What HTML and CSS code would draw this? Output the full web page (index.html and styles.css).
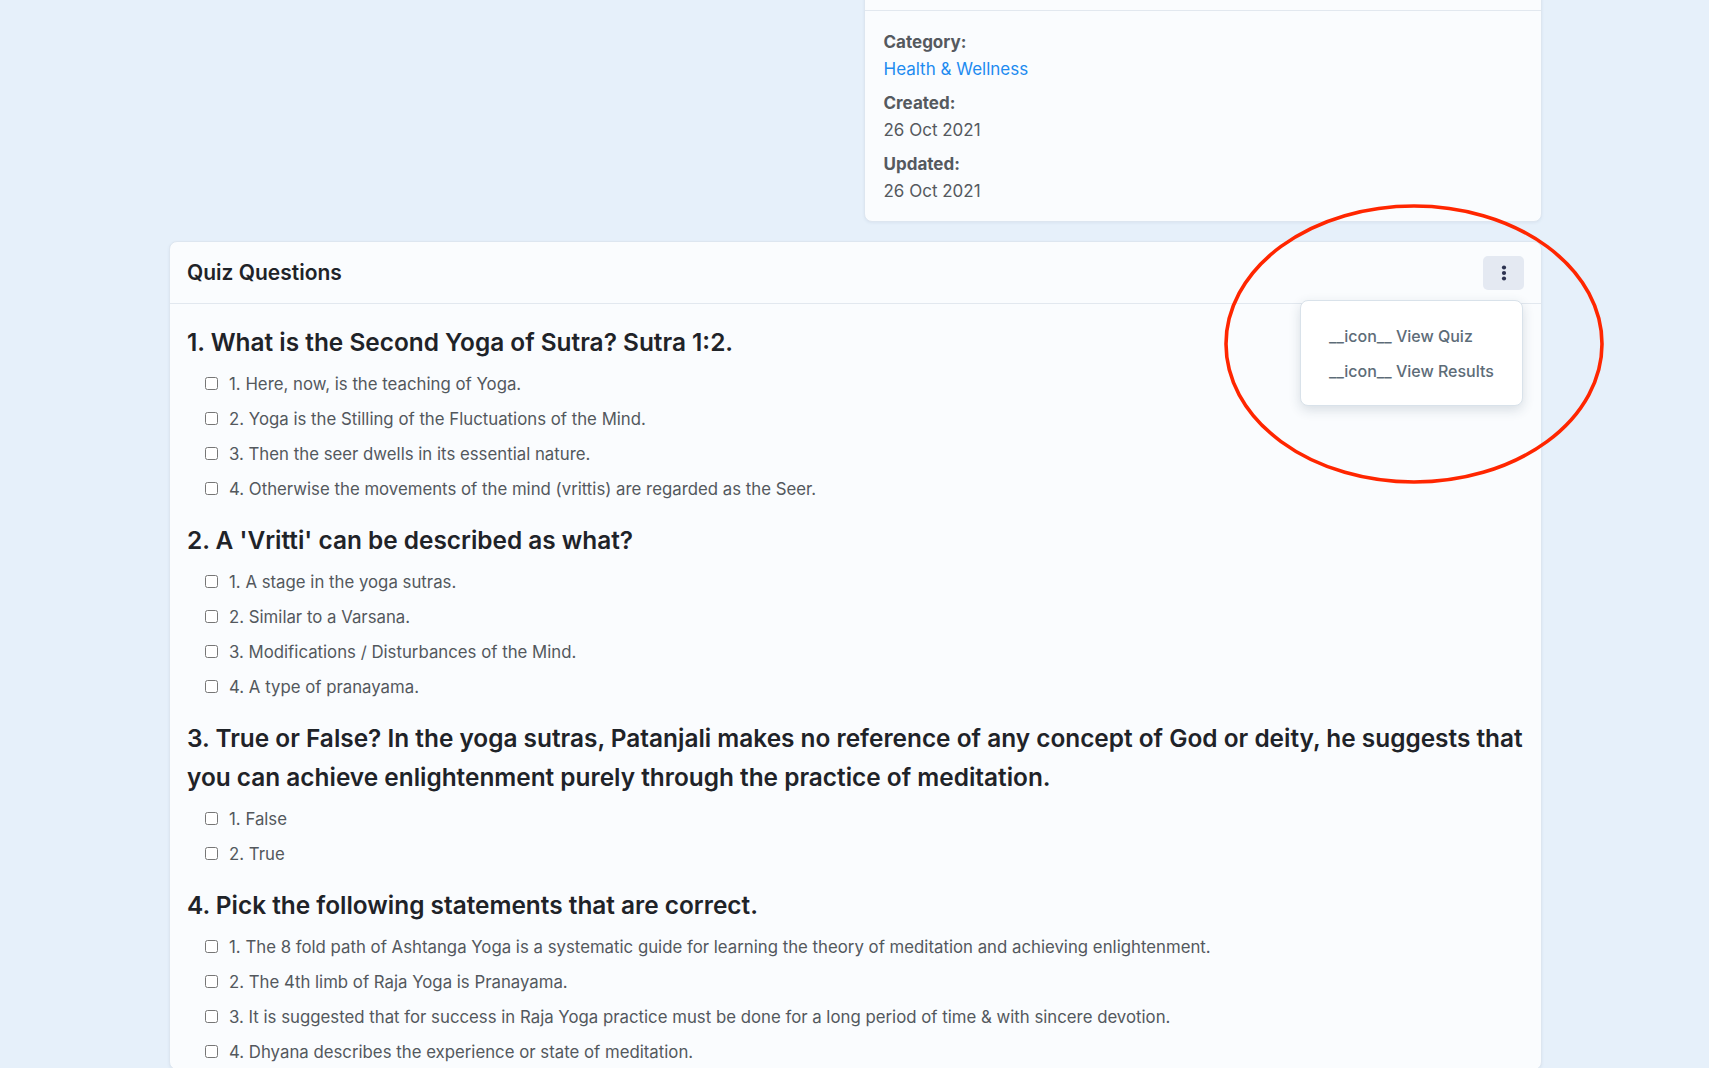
FILE: index.html
```html
<!DOCTYPE html>
<html lang="en">
<head>
    <meta charset="UTF-8">
    <title>Quiz</title>
    <link rel="stylesheet" href="styles.css">
</head>
<body>
<div class="page">
    <div class="top-row">
        <div class="spacer"></div>
        <div class="card info-card">
            <div class="card-head"></div>
            <div class="info-body">
                <div class="info-item">
                    <div class="info-label">Category:</div>
                    <a class="info-link" href="#">Health &amp; Wellness</a>
                </div>
                <div class="info-item">
                    <div class="info-label">Created:</div>
                    <div class="info-value">26 Oct 2021</div>
                </div>
                <div class="info-item">
                    <div class="info-label">Updated:</div>
                    <div class="info-value">26 Oct 2021</div>
                </div>
            </div>
        </div>
    </div>

    <div class="card quiz-card">
        <div class="quiz-head">
            <h2>Quiz Questions</h2>
            <div class="menu">
                <button class="menu-btn" type="button">
                    <svg width="6" height="18" viewBox="0 0 6 18">
                        <circle cx="3" cy="3.5" r="2.1" fill="#2c3250"/>
                        <circle cx="3" cy="9" r="2.1" fill="#2c3250"/>
                        <circle cx="3" cy="14.5" r="2.1" fill="#2c3250"/>
                    </svg>
                </button>
                <ul class="menu-list">
                    <li>__icon__ View Quiz</li>
                    <li>__icon__ View Results</li>
                </ul>
            </div>
        </div>

        <div class="quiz-body">
            <div class="question">
                <h3>1. What is the Second Yoga of Sutra? Sutra 1:2.</h3>
                <label class="option"><input type="checkbox"> 1. Here, now, is the teaching of Yoga.</label>
                <label class="option"><input type="checkbox"> 2. Yoga is the Stilling of the Fluctuations of the Mind.</label>
                <label class="option"><input type="checkbox"> 3. Then the seer dwells in its essential nature.</label>
                <label class="option"><input type="checkbox"> 4. Otherwise the movements of the mind (vrittis) are regarded as the Seer.</label>
            </div>
            <div class="question">
                <h3>2. A 'Vritti' can be described as what?</h3>
                <label class="option"><input type="checkbox"> 1. A stage in the yoga sutras.</label>
                <label class="option"><input type="checkbox"> 2. Similar to a Varsana.</label>
                <label class="option"><input type="checkbox"> 3. Modifications / Disturbances of the Mind.</label>
                <label class="option"><input type="checkbox"> 4. A type of pranayama.</label>
            </div>
            <div class="question">
                <h3>3. True or False? In the yoga sutras, Patanjali makes no reference of any concept of God or deity, he suggests that you can achieve enlightenment purely through the practice of meditation.</h3>
                <label class="option"><input type="checkbox"> 1. False</label>
                <label class="option"><input type="checkbox"> 2. True</label>
            </div>
            <div class="question">
                <h3>4. Pick the following statements that are correct.</h3>
                <label class="option"><input type="checkbox"> 1. The 8 fold path of Ashtanga Yoga is a systematic guide for learning the theory of meditation and achieving enlightenment.</label>
                <label class="option"><input type="checkbox"> 2. The 4th limb of Raja Yoga is Pranayama.</label>
                <label class="option"><input type="checkbox"> 3. It is suggested that for success in Raja Yoga practice must be done for a long period of time &amp; with sincere devotion.</label>
                <label class="option"><input type="checkbox"> 4. Dhyana describes the experience or state of meditation.</label>
            </div>
        </div>
    </div>
</div>

<!-- annotation ring drawn over the menu -->
<svg class="ring" width="386" height="286" viewBox="0 0 386 286">
    <ellipse cx="193" cy="143" rx="188" ry="138" fill="none" stroke="#ff2600" stroke-width="3.6"/>
</svg>
</body>
</html>
```

FILE: styles.css
```css
* {
    margin: 0;
    padding: 0;
    box-sizing: border-box;
}

body {
    background: #e6f0fa;
    font-family: Inter, "Noto Sans", sans-serif;
    color: #212529;
    overflow: hidden;
}

ul {
    list-style: none;
}

.page {
    width: 1373px;
    margin: -51px 0 0 169px;
}

.top-row {
    display: grid;
    grid-template-columns: 1fr 1fr;
    gap: 16px;
    margin-bottom: 19px;
}

.card {
    background: #fafcfe;
    border: 1px solid #dde6f0;
    border-radius: 8px;
    box-shadow: 0 1px 3px rgba(60, 90, 130, .08);
}

.card-head {
    height: 61px;
    border-bottom: 1px solid #e2e8ef;
}

.info-body {
    padding: 18px 19px 16px;
    display: flex;
    flex-direction: column;
    gap: 7px;
}

.info-item {
    font-size: 17px;
    line-height: 27px;
    color: #55595e;
}

.info-label {
    font-weight: 700;
}

.info-link {
    color: #1e8bf0;
    text-decoration: none;
}

.quiz-head {
    height: 62px;
    padding: 0 17px;
    display: flex;
    align-items: center;
    justify-content: space-between;
    border-bottom: 1px solid #e2e8ef;
}

.quiz-head h2 {
    font-size: 21px;
    font-weight: 600;
    color: #1f2328;
}

.menu {
    position: relative;
}

.menu-btn {
    width: 41px;
    height: 34px;
    border: 0;
    border-radius: 5px;
    background: #e4e9f2;
    display: flex;
    align-items: center;
    justify-content: center;
}

.menu-list {
    position: absolute;
    top: 44px;
    right: 1px;
    width: 223px;
    padding: 18px 28px 16px;
    background: #fff;
    border: 1px solid #d9e2ea;
    border-radius: 8px;
    box-shadow: 0 4px 12px rgba(40, 60, 90, .16);
    z-index: 2;
}

.menu-list li {
    font-size: 16px;
    font-weight: 500;
    line-height: 35px;
    color: #5d6c78;
    white-space: nowrap;
}

.quiz-body {
    padding: 19px 17px 0;
    display: flex;
    flex-direction: column;
    gap: 15px;
}

.question h3 {
    font-size: 24.4px;
    font-weight: 600;
    line-height: 39px;
    color: #1f2328;
    margin-bottom: 4px;
}

.option {
    display: flex;
    align-items: center;
    height: 35px;
    padding-left: 18px;
    font-size: 16.8px;
    color: #53585d;
}

.option input {
    width: 13px;
    height: 13px;
    margin: 0 11px 0 0;
}

.ring {
    position: absolute;
    left: 1221px;
    top: 201px;
}
```
